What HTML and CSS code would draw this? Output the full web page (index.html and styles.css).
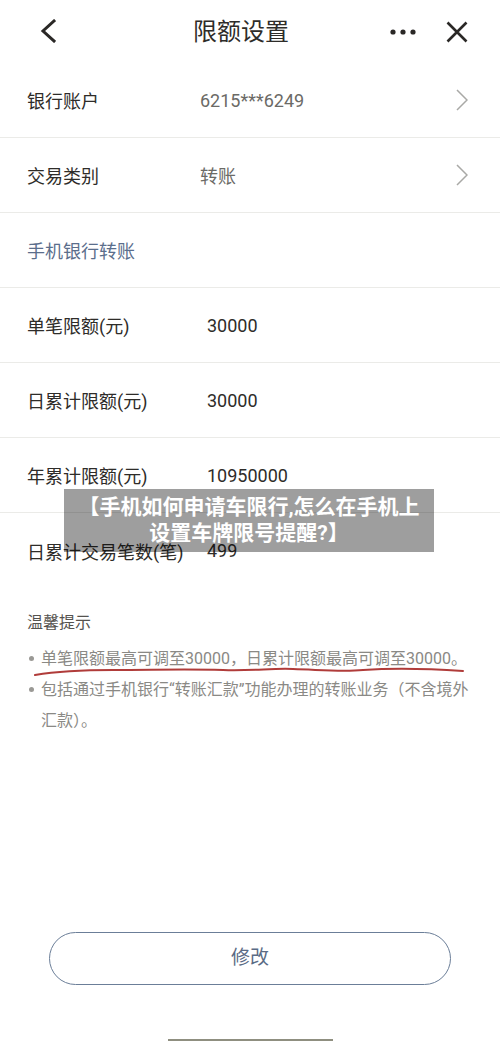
FILE: index.html
```html
<!DOCTYPE html>
<html lang="zh-CN">
<head>
<meta charset="utf-8">
<title>限额设置</title>
<link rel="stylesheet" href="styles.css">
</head>
<body>
<div class="page">
  <header class="header">
    <svg class="back" width="16" height="24" viewBox="0 0 16 24"><path d="M14 2 L3 12 L14 22" fill="none" stroke="#2a2826" stroke-width="3" stroke-linecap="square"/></svg>
    <h1 class="title">限额设置</h1>
    <div class="spacer"></div>
    <svg class="dots" width="26" height="6" viewBox="0 0 26 6"><circle cx="3" cy="3" r="2.6" fill="#2a2826"/><circle cx="13" cy="3" r="2.6" fill="#2a2826"/><circle cx="23" cy="3" r="2.6" fill="#2a2826"/></svg>
    <svg class="close" width="22" height="22" viewBox="0 0 22 22"><path d="M1.5 1.5 L20.5 20.5 M20.5 1.5 L1.5 20.5" fill="none" stroke="#2a2826" stroke-width="2.6"/></svg>
  </header>

  <div class="row">
    <span class="label">银行账户</span>
    <span class="value muted">6215***6249</span>
    <svg class="chev" width="12" height="22" viewBox="0 0 12 22"><path d="M1 1 L11 11 L1 21" fill="none" stroke="#a9a9a6" stroke-width="1.5"/></svg>
  </div>
  <div class="row">
    <span class="label">交易类别</span>
    <span class="value muted">转账</span>
    <svg class="chev" width="12" height="22" viewBox="0 0 12 22"><path d="M1 1 L11 11 L1 21" fill="none" stroke="#a9a9a6" stroke-width="1.5"/></svg>
  </div>
  <div class="row section">手机银行转账</div>
  <div class="row">
    <span class="label wide">单笔限额(元)</span>
    <span class="value">30000</span>
  </div>
  <div class="row">
    <span class="label wide">日累计限额(元)</span>
    <span class="value">30000</span>
  </div>
  <div class="row">
    <span class="label wide">年累计限额(元)</span>
    <span class="value">10950000</span>
  </div>
  <div class="row last">
    <span class="label wide">日累计交易笔数(笔)</span>
    <span class="value">499</span>
  </div>

  <section class="tips">
    <h2 class="tips-title">温馨提示</h2>
    <ul class="tips-list">
      <li class="tip marked">单笔限额最高可调至30000，日累计限额最高可调至30000。
        <svg class="redline" width="434" height="14" viewBox="0 0 434 14"><path d="M2 11 C20 8 45 6 80 6 C120 6 150 5 190 6 C220 7 240 4 260 5 C290 6 310 8 330 6 C360 4 400 5 430 7" fill="none" stroke="#b03c3a" stroke-width="2" stroke-linecap="round"/></svg>
      </li>
      <li class="tip">包括通过手机银行“转账汇款”功能办理的转账业务（不含境外<br>汇款）。</li>
    </ul>
  </section>

  <div class="footer">
    <button class="btn">修改</button>
    <div class="home"></div>
  </div>

  <div class="overlay">【手机如何申请车限行,怎么在手机上<br>设置车牌限号提醒?】</div>
</div>
</body>
</html>
```

FILE: styles.css
```css
* { box-sizing: border-box; }
html, body { margin: 0; padding: 0; background: #fff; }
body {
  font-family: Roboto, "Noto Sans CJK SC", sans-serif;
  color: #2e2c29;
}
.page {
  position: relative;
  width: 500px;
  height: 1042px;
  overflow: hidden;
  display: flex;
  flex-direction: column;
}
.header {
  height: 63px;
  display: flex;
  align-items: center;
  padding: 0 32px 0 40px;
  flex-shrink: 0;
}
.back { margin-top: -1px; }
.title {
  margin: 0 0 0 137px;
  font-size: 24px;
  font-weight: 400;
  color: #2e2c29;
  line-height: 1;
}
.spacer { flex: 1; }
.dots { margin-right: 30px; }
.row {
  height: 75px;
  border-bottom: 1px solid #ebebe8;
  display: flex;
  align-items: center;
  padding: 0 32px 0 27px;
  font-size: 18px;
  flex-shrink: 0;
}
.row.last { border-bottom: none; }
.label { width: 173px; color: #2e2c29; }
.label.wide { width: 180px; }
.value { flex: 1; color: #2e2c29; }
.value.muted { color: #6b6a66; }
.section { color: #5b6e8c; }
.tips {
  padding: 23px 27px 0 27px;
}
.tips-title {
  margin: 0;
  font-size: 16px;
  font-weight: 400;
  line-height: 24px;
  color: #55534f;
}
.tips-list {
  list-style: none;
  margin: 8px 0 0 0;
  padding: 0;
}
.tip {
  position: relative;
  padding-left: 14px;
  font-size: 16px;
  line-height: 31px;
  color: #8a8985;
}
.tip::before {
  content: "";
  position: absolute;
  left: 2px;
  top: 13px;
  width: 5px;
  height: 5px;
  border-radius: 50%;
  background: #9a9995;
}
.redline {
  position: absolute;
  left: 6px;
  top: 21px;
}
.footer {
  margin-top: auto;
  display: flex;
  flex-direction: column;
  align-items: center;
}
.btn {
  width: 402px;
  height: 53px;
  border: 1.5px solid #6b7e98;
  border-radius: 27px;
  background: #fff;
  font-family: Roboto, "Noto Sans CJK SC", sans-serif;
  font-size: 19px;
  line-height: 1;
  color: #5a6b85;
  padding: 0 0 2px 0;
}
.home {
  margin-top: 54px;
  margin-bottom: 1px;
  width: 165px;
  height: 2px;
  background: #8f8f80;
}
.overlay {
  position: absolute;
  left: 64px;
  top: 489px;
  width: 370px;
  height: 63px;
  background: rgba(0, 0, 0, 0.38);
  color: #fff;
  font-weight: 700;
  font-size: 21px;
  line-height: 26px;
  text-align: center;
  display: flex;
  align-items: center;
  justify-content: center;
  padding-bottom: 2px;
}
```
